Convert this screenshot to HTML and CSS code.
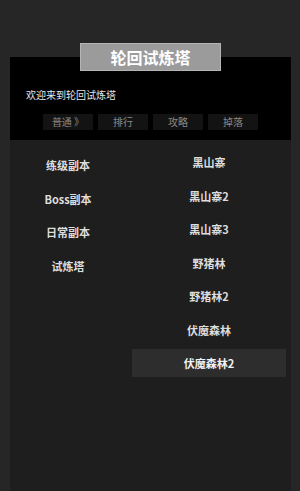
FILE: index.html
```html
<!DOCTYPE html>
<html lang="zh">
<head>
    <meta charset="UTF-8">
    <title>轮回试炼塔</title>
    <link rel="stylesheet" href="styles.css">
</head>
<body>
<div class="frame">
    <div class="title">轮回试炼塔</div>
    <div class="head">
        <p class="welcome">欢迎来到轮回试炼塔</p>
        <ul class="tabs">
            <li>普通 》</li>
            <li>排行</li>
            <li>攻略</li>
            <li>掉落</li>
        </ul>
    </div>
    <div class="main">
        <ul class="side">
            <li>练级副本</li>
            <li>Boss副本</li>
            <li>日常副本</li>
            <li>试炼塔</li>
        </ul>
        <ul class="list">
            <li>黑山寨</li>
            <li>黑山寨2</li>
            <li>黑山寨3</li>
            <li>野猪林</li>
            <li>野猪林2</li>
            <li>伏魔森林</li>
            <li class="active">伏魔森林2</li>
        </ul>
    </div>
</div>
</body>
</html>
```

FILE: styles.css
```css
*{
    margin: 0;
    padding: 0;
}
html,body{
    height: 100%;
    overflow: hidden;
}
body{
    background: #262626;
    font-family: "Noto Sans CJK SC", "Noto Sans", sans-serif;
    color: #ddd;
}
ul{
    list-style: none;
}
.frame{
    margin: 43px 9px 0 10px;
    display: flex;
    flex-direction: column;
    height: 448px;
}
.title{
    position: relative;
    z-index: 1;
    width: 139px;
    height: 26px;
    margin: 0 0 0 70px;
    background: #9b9b9b;
    border: 1px solid #b5b5b5;
    color: #fff;
    font-size: 16px;
    font-weight: bold;
    line-height: 26px;
    text-align: center;
}
.head{
    margin-top: -14px;
    height: 83px;
    background: #000;
    padding: 0 0 0 16px;
    box-sizing: border-box;
}
.welcome{
    font-size: 10px;
    line-height: 14px;
    margin-top: 31px;
    color: #e6e6e6;
}
.tabs{
    display: flex;
    gap: 5px;
    margin: 12px 0 0 17px;
}
.tabs li{
    width: 50px;
    height: 16px;
    line-height: 16px;
    background: #131313;
    color: #8a8a8a;
    font-size: 10px;
    text-align: center;
}
.main{
    flex: 1;
    display: flex;
    background: #1e1e1e;
}
.side{
    width: 116px;
    padding-top: 11px;
    display: flex;
    flex-direction: column;
    gap: 5.7px;
}
.side li{
    height: 28px;
    line-height: 28px;
    font-size: 11px;
    font-weight: bold;
    text-align: center;
}
.list{
    flex: 1;
    padding: 8px 5px 0 6px;
    display: flex;
    flex-direction: column;
    gap: 5.5px;
}
.list li{
    height: 28px;
    line-height: 28px;
    font-size: 11px;
    font-weight: bold;
    text-align: center;
}
.list li.active{
    background: #2d2d2d;
    color: #f2f2f2;
}
```
